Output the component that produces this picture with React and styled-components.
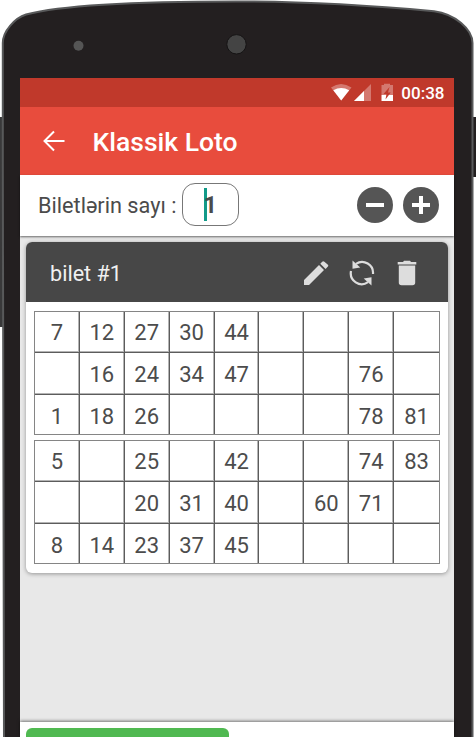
import React from "react";
import styled, { createGlobalStyle } from "styled-components";

const GlobalStyle = createGlobalStyle`
  * { box-sizing: border-box; }
  body { margin: 0; background: #fff; font-family: Roboto, sans-serif; overflow: hidden; }
`;

const Device = styled.div`
  position: relative;
  width: 476px;
  height: 737px;
  padding: 78px 22px 0 20px;
  overflow: hidden;
`;

const Shell = styled.svg`
  position: absolute;
  inset: 0;
  z-index: -1;
`;

const Screen = styled.main`
  display: flex;
  flex-direction: column;
  height: 659px;
  background: #e8e8e8;
`;

const StatusBar = styled.div`
  display: flex;
  align-items: center;
  justify-content: flex-end;
  flex: none;
  height: 29px;
  padding-right: 9.5px;
  background: #c0392b;
`;

const StatusIcons = styled.svg`
  margin-right: 8px;
`;

const Clock = styled.time`
  color: #fff;
  font-size: 17px;
  font-weight: 500;
  line-height: 29px;
  padding-top: 1px;
`;

const AppBar = styled.header`
  display: flex;
  align-items: center;
  flex: none;
  height: 67.5px;
  padding: 1px 0 0 22px;
  background: #e84c3d;
`;

const Title = styled.h1`
  margin: 1px 0 0 26.5px;
  color: #fff;
  font-size: 26.5px;
  font-weight: 500;
  line-height: 32px;
`;

const CountRow = styled.section`
  display: flex;
  align-items: center;
  flex: none;
  height: 61px;
  padding: 0 15px 0 18px;
  background: #fff;
  box-shadow: 0 1px 2px rgba(0, 0, 0, 0.55);
  color: #4b4b4b;
  font-size: 21.7px;
`;

const CountField = styled.div`
  display: flex;
  align-items: center;
  justify-content: center;
  width: 57px;
  height: 43px;
  margin: 0 0 2px 6px;
  padding: 2px 1px 0 0;
  border: 1px solid #777;
  border-radius: 13px;
  font-size: 23px;
  font-weight: 700;
`;

const Caret = styled.span`
  width: 3px;
  height: 33px;
  margin: -2px -3px 0 0;
  background: #129a88;
`;

const RoundButton = styled.button`
  display: flex;
  align-items: center;
  justify-content: center;
  width: 36px;
  height: 36px;
  margin: 0 0 1px ${(p) => (p.$push ? "auto" : "10px")};
  padding: 0;
  border: 0;
  border-radius: 50%;
  background: #555;
`;

const Ticket = styled.article`
  flex: none;
  height: 331px;
  margin: 6.5px 6px 0;
  border-radius: 6px;
  background: #fff;
  box-shadow: 0 1px 4px rgba(0, 0, 0, 0.36);
`;

const TicketHeader = styled.header`
  display: flex;
  align-items: center;
  height: 60px;
  padding: 2px 31px 0 24px;
  border-radius: 6px 6px 0 0;
  background: #474747;
  color: #f0f0f0;
  font-size: 21.6px;
`;

const TicketActions = styled.div`
  display: flex;
  align-items: center;
  margin-left: auto;

  svg + svg {
    margin-left: 18px;
  }

  svg:last-child {
    margin-left: 21px;
  }
`;

const Blocks = styled.div`
  display: flex;
  flex-direction: column;
  gap: 5px;
  padding: 9px 8px;
`;

const Block = styled.div`
  display: grid;
  grid-template-columns: repeat(9, 1fr);
  grid-template-rows: 41px 42px 39px;
  height: 124px;
  border: 1px solid #858585;
`;

const Cell = styled.div`
  display: flex;
  align-items: center;
  justify-content: center;
  height: 100%;
  padding-top: ${(p) => (p.$lastRow ? "4px" : "2px")};
  border-right: ${(p) => (p.$lastColumn ? "0" : "1px solid #5c5c5c")};
  border-bottom: ${(p) => (p.$lastRow ? "0" : "1px solid #5c5c5c")};
  box-shadow: inset ${(p) => (p.$lastColumn ? "0" : "-1px")} ${(p) => (p.$lastRow ? "0" : "-1px")} 0 #b4b4b4;
  color: #4c4c4c;
  font-size: 22px;
  line-height: 26px;
`;

const Footer = styled.footer`
  flex: none;
  height: 15px;
  margin-top: auto;
  padding: 6px 6px 0;
  background: #fff;
  box-shadow: 0 -1px 3px rgba(0, 0, 0, 0.5);
  overflow: visible;
`;

const GreenButton = styled.button`
  display: block;
  width: 203px;
  height: 48px;
  padding: 0;
  border: 0;
  border-radius: 6px;
  background: #50b951;
`;

const BLOCKS = [
  [
    [7, 12, 27, 30, 44, "", "", "", ""],
    ["", 16, 24, 34, 47, "", "", 76, ""],
    [1, 18, 26, "", "", "", "", 78, 81],
  ],
  [
    [5, "", 25, "", 42, "", "", 74, 83],
    ["", "", 20, 31, 40, "", 60, 71, ""],
    [8, 14, 23, 37, 45, "", "", "", ""],
  ],
];

function DeviceShell() {
  return (
    <Shell width="476" height="737" viewBox="0 0 476 737">
      <path d="M0 117H4V327H0Z" fill="#39393a" />
      <path d="M472 117H476V177H472Z" fill="#231f20" />
      <path
        d="M4 740L2.800 160V43C2.800 31 15 18 26 14.500C62 5 145 1.500 236 1.500C306 1.500 370 5.500 434 11.200C455 14 472.500 29 472.500 43V740Z"
        fill="#231f20"
        stroke="#58595a"
        strokeWidth="2"
      />
      <circle cx="78.500" cy="45.800" r="5" fill="#555" />
      <circle cx="236.500" cy="44.300" r="9.700" fill="#444" stroke="#151314" />
    </Shell>
  );
}

function SystemIcons() {
  return (
    <StatusIcons width="62" height="19" viewBox="331 83 62 19" fill="#fff">
      <path d="M331 87.500Q341 80.500 351.500 87.500L341.200 100.500Z" opacity=".32" />
      <path d="M333.300 90.300Q341.200 85.500 349.200 90.300L341.200 100.500Z" />
      <path d="M371 84V101H354Z" opacity=".32" />
      <path d="M364 91V101H354Z" />
      <path d="M381.500 85H384V83.700H390V85H393V95H381.500Z" opacity=".32" />
      <path d="M381.500 95H393V101H381.500Z" />
      <path d="M389.500 87L383.500 94H386.500L385.500 99.500L390.700 92.500H388Z" fill="#c0392b" />
    </StatusIcons>
  );
}

function BackIcon() {
  return (
    <svg width="24" height="22" viewBox="0 0 24 22" fill="none" stroke="#fff" strokeWidth="2">
      <path d="M12 1.500L2.500 11L12 20.500M2 11H22.500" />
    </svg>
  );
}

function SignIcon({ plus }) {
  return (
    <svg width="20" height="20" viewBox="0 0 20 20" stroke="#fff" strokeWidth="4">
      <path d={plus ? "M1 10H19M10 1V19" : "M1 10H19"} />
    </svg>
  );
}

function PencilIcon() {
  return (
    <svg width="28" height="28" viewBox="0 0 28 28" fill="#ddd">
      <path d="M2 21L17 6L22 11L7 26H2ZM18.300 4.700L20.200 2.700Q21.300 1.600 22.400 2.700L25.900 5.700Q26.800 6.700 25.900 7.600L23.600 9.900Z" />
    </svg>
  );
}

function RefreshIcon() {
  return (
    <svg width="28" height="28" viewBox="0 0 28 28" fill="none" stroke="#ddd" strokeWidth="2.200">
      <path d="M8 4.800A11 11 0 0 1 25 15M20 23.200A11 11 0 0 1 3 12" />
      <path d="M4.500 1.500V9.800L12.300 8.500ZM23.500 26.500V18.200L15.700 19.500Z" fill="#ddd" stroke="none" />
    </svg>
  );
}

function TrashIcon() {
  return (
    <svg width="20" height="28" viewBox="0 0 20 28" fill="#ddd">
      <path d="M.7 3H6L7 1.700H13L14 3H19.300V5.500H.7ZM1.800 6.500H18.200V23.500Q18.200 26.300 15.500 26.300H4.500Q1.800 26.300 1.800 23.500Z" />
    </svg>
  );
}

export default function App() {
  return (
    <Device>
      <GlobalStyle />
      <DeviceShell />
      <Screen>
        <StatusBar>
          <SystemIcons />
          <Clock>00:38</Clock>
        </StatusBar>
        <AppBar>
          <BackIcon />
          <Title>Klassik Loto</Title>
        </AppBar>
        <CountRow>
          <span>Biletlərin sayı :</span>
          <CountField>
            <Caret />1
          </CountField>
          <RoundButton $push aria-label="minus">
            <SignIcon />
          </RoundButton>
          <RoundButton aria-label="plus">
            <SignIcon plus />
          </RoundButton>
        </CountRow>
        <Ticket>
          <TicketHeader>
            <span>bilet #1</span>
            <TicketActions>
              <PencilIcon />
              <RefreshIcon />
              <TrashIcon />
            </TicketActions>
          </TicketHeader>
          <Blocks>
            {BLOCKS.map((rows, b) => (
              <Block key={b}>
                {rows.map((row, r) =>
                  row.map((value, c) => (
                    <Cell key={`${r}-${c}`} $lastColumn={c === 8} $lastRow={r === 2}>
                      {value}
                    </Cell>
                  ))
                )}
              </Block>
            ))}
          </Blocks>
        </Ticket>
        <Footer>
          <GreenButton aria-label="play" />
        </Footer>
      </Screen>
    </Device>
  );
}
